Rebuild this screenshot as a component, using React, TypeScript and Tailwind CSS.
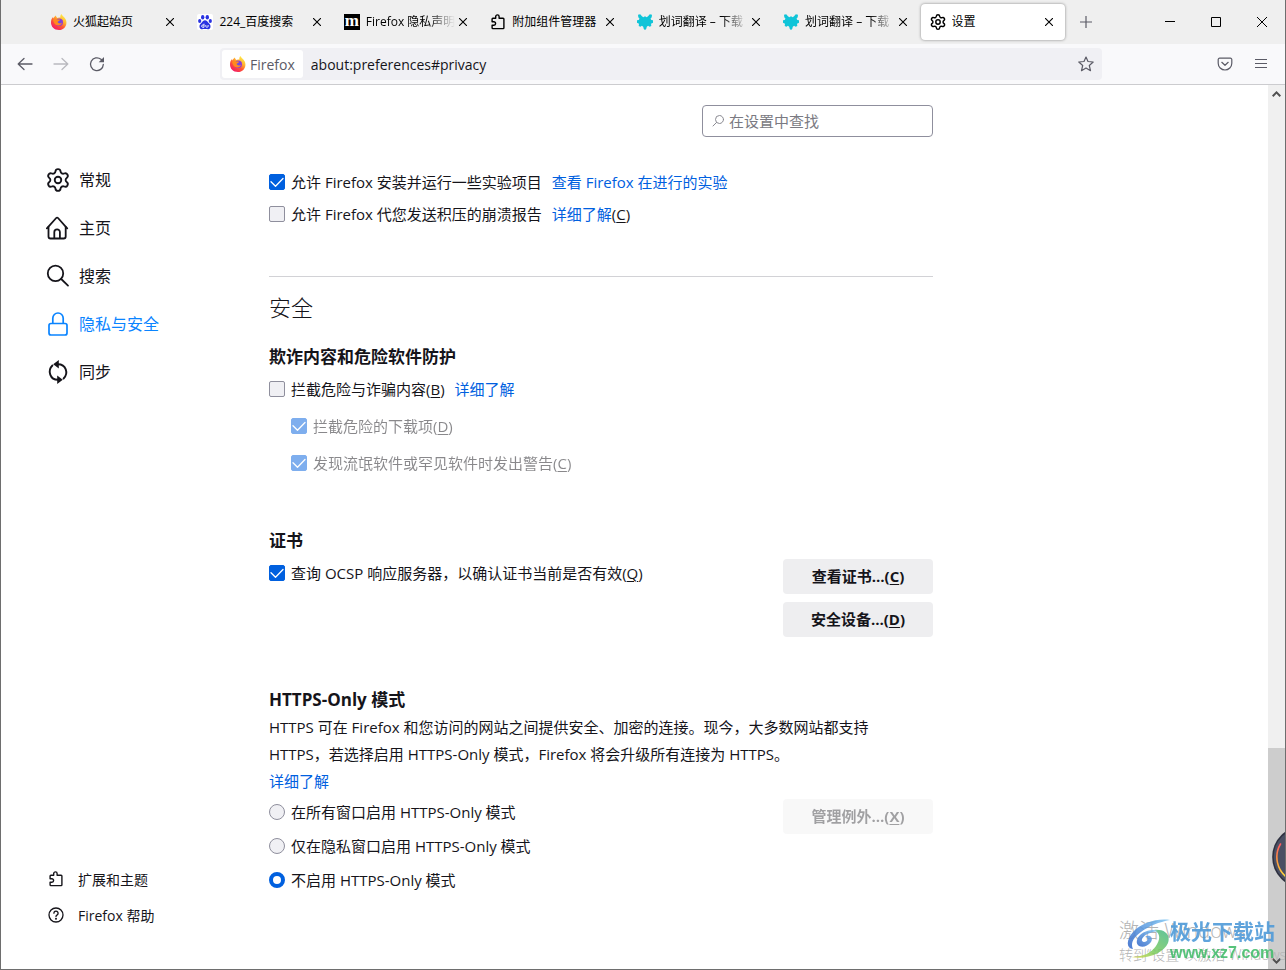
import React, { useState } from "react";
import { Settings } from "lucide-react";
import clsx from "clsx";

function FirefoxLogo({ id }: { id: string }) {
  return (
    <svg width="16" height="16" viewBox="0 0 32 32" className="shrink-0" aria-hidden="true">
      <defs>
        <linearGradient id={id + "-body"} x1="0.85" y1="0.05" x2="0.2" y2="1">
          <stop offset="0" stopColor="#fff44f" />
          <stop offset="0.35" stopColor="#ffb02e" />
          <stop offset="0.6" stopColor="#ff5634" />
          <stop offset="1" stopColor="#f0126f" />
        </linearGradient>
        <radialGradient id={id + "-core"}>
          <stop offset="0.2" stopColor="#6b4ce6" />
          <stop offset="1" stopColor="#9338d4" />
        </radialGradient>
      </defs>
      <path
        d="M21 0c1 4 6 6 8.500 11C34 21 27 32 16 32 6 32 0 25 0 17c0-4 1-8 4-11l1 3c1-3 3-5 5-6 0 2 1 4 3 5 2-1 4-1 6-1-1-3 0-5 2-7z"
        fill={`url(#${id}-body)`}
      />
      <circle cx="16.500" cy="16.500" r="7.500" fill={`url(#${id}-core)`} />
      <path d="M4 12c3-4 7-3 9-1h5c0 3-4 3-5 5 2 3 6 4 9 1-1 6-9 8-14 3-2-2-3-5-4-8z" fill="#ff8a1f" />
    </svg>
  );
}

function BaiduLogo() {
  return (
    <svg width="16" height="16" viewBox="0 0 16 16" className="shrink-0" aria-hidden="true">
      <rect width="16" height="16" rx="2" fill="#fff" />
      <g fill="#2932e1">
        <ellipse cx="5.700" cy="3.200" rx="1.700" ry="2.200" />
        <ellipse cx="10.300" cy="3.200" rx="1.700" ry="2.200" />
        <ellipse cx="2.700" cy="6.900" rx="1.600" ry="2" />
        <ellipse cx="13.300" cy="6.900" rx="1.600" ry="2" />
        <path d="M8 6.300c1.600 0 2.300 1.300 3.400 2.500 1.400 1.400 2.600 2.500 2 4.600-.5 1.800-2.400 2-3.900 1.700-1-.2-2-.2-3 0-1.500.3-3.400.1-3.900-1.700-.6-2.100.6-3.200 2-4.600C5.700 7.600 6.400 6.300 8 6.300z" />
      </g>
      <path d="M7 9.700v3.600H5.800a1.100 1.100 0 0 1 0-2.300H7M8.800 11v1.400c0 1.200 2.300 1.200 2.300 0V11" fill="none" stroke="#fff" strokeWidth="0.900" />
    </svg>
  );
}

function MozillaLogo() {
  return (
    <span className="flex size-4 shrink-0 items-center justify-center bg-black pb-[3px] font-['Liberation_Serif',serif] text-[17px] leading-none font-bold text-white">
      m
    </span>
  );
}

function TranslateLogo() {
  return (
    <svg width="16" height="16" viewBox="0 0 16 16" className="shrink-0" fill="#0fc4d8" aria-hidden="true">
      <path d="M1 .8 3.200.3 5 2.200 6.300 3.200 8 2.300l1.700.9L11 2.200 12.800.3l2.200.5-.3 2.400-1.200 1.600.8 1.200L16 6.300v2.500l-2 .9.300 2.200-1.700.8-1.500-1-1.300 1-.6 2.200L8 16l-1.200-1.100-.6-2.200-1.300-1-1.500 1-1.700-.8L2 9.700 0 8.800V6.300L1.700 6l.8-1.200L1.300 3.200z" />
    </svg>
  );
}

function PuzzleIcon() {
  return (
    <svg width="16" height="16" viewBox="0 0 16 16" className="shrink-0" fill="none" stroke="currentColor" strokeWidth="1.400" strokeLinejoin="round" aria-hidden="true">
      <path d="M5.700 4.200V2.600a1.700 1.700 0 0 1 3.400 0v1.600h4a.8.8 0 0 1 .8.8v8.800a.8.8 0 0 1-.8.8H2.900a.8.8 0 0 1-.8-.8v-2.600h1.800a1.600 1.600 0 0 0 0-3.400H2.100V5a.8.8 0 0 1 .8-.8z" />
    </svg>
  );
}

function HomeIcon() {
  return (
    <svg width="24" height="24" viewBox="0 0 24 24" fill="none" stroke="currentColor" strokeWidth="1.800" strokeLinecap="round" strokeLinejoin="round" aria-hidden="true">
      <path d="M.9 12.400 10.200 2a1.200 1.200 0 0 1 1.800 0l9.200 10.400" />
      <path d="M2.500 11v9.500a2 2 0 0 0 2 2h13.200a2 2 0 0 0 2-2V11" />
      <path d="M8.300 22.200v-6a2.800 2.800 0 0 1 5.600 0v6" />
    </svg>
  );
}

function SearchIcon() {
  return (
    <svg width="24" height="24" viewBox="0 0 24 24" fill="none" stroke="currentColor" strokeWidth="1.800" strokeLinecap="round" aria-hidden="true">
      <circle cx="9.500" cy="9.400" r="7.700" />
      <path d="m15.200 15 6.800 6.600" />
    </svg>
  );
}

function LockIcon() {
  return (
    <svg width="24" height="24" viewBox="0 0 24 24" fill="none" stroke="currentColor" strokeWidth="1.700" aria-hidden="true">
      <rect x="3" y="11.500" width="18" height="11.500" rx="2" />
      <path d="M6.800 11.500V6.200a5.200 5.200 0 0 1 10.400 0v5.300" />
    </svg>
  );
}

function SyncIcon() {
  return (
    <svg width="24" height="24" viewBox="0 0 24 24" fill="none" stroke="currentColor" strokeWidth="1.900" strokeLinecap="round" aria-hidden="true">
      <path d="M12 4.200c8 0 10.800 9.200 5.600 14.300M12 19.800C4 19.800 1.200 10.600 6.400 5.500" />
      <path d="M12.800 0v8.600L7.200 4.300zM11.200 15.400V24l5.600-4.300z" fill="currentColor" stroke="none" />
    </svg>
  );
}

function HelpIcon() {
  return (
    <svg width="16" height="16" viewBox="0 0 16 16" fill="none" stroke="currentColor" strokeWidth="1.300" strokeLinecap="round" aria-hidden="true">
      <circle cx="8" cy="8" r="7" />
      <path d="M5.900 6.200a2.100 2.100 0 1 1 3.300 1.700c-.8.500-1.200.8-1.200 1.600" />
      <circle cx="8" cy="11.700" r="0.400" fill="currentColor" />
    </svg>
  );
}

function CloseIcon() {
  return (
    <svg width="8" height="8" viewBox="0 0 8 8" stroke="currentColor" strokeWidth="1.100" aria-hidden="true">
      <path d="m0 0 8 8M8 0 0 8" />
    </svg>
  );
}

const tabs = [
  { title: "火狐起始页", icon: <FirefoxLogo id="tab" /> },
  { title: "224_百度搜索", icon: <BaiduLogo /> },
  { title: "Firefox 隐私声明", icon: <MozillaLogo />, fade: true },
  { title: "附加组件管理器", icon: <PuzzleIcon /> },
  { title: "划词翻译 – 下载", icon: <TranslateLogo />, fade: true },
  { title: "划词翻译 – 下载", icon: <TranslateLogo />, fade: true },
  { title: "设置", icon: <Settings size={16} viewBox="1 1 22 22" className="shrink-0" />, active: true },
];

function TabBar() {
  return (
    <header className="flex h-11 bg-[#efefef] pl-10 text-[12px] text-black">
      <div className="flex max-w-[1025px] min-w-0 flex-1">
        {tabs.map((tab, idx) => (
          <div
            key={idx}
            className={clsx(
              "mx-px my-1 flex min-w-0 flex-1 items-center rounded pr-3 pl-[9px]",
              tab.active && "bg-white shadow-[0_0_3px_rgba(0,0,0,0.45)]"
            )}
          >
            {tab.icon}
            <span
              className={clsx(
                "ml-[6px] min-w-0 flex-1 overflow-hidden whitespace-nowrap",
                tab.fade && "[mask-image:linear-gradient(to_left,transparent,black_26px)]"
              )}
            >
              {tab.title}
            </span>
            <button aria-label="关闭标签页" className="ml-1">
              <CloseIcon />
            </button>
          </div>
        ))}
      </div>
      <button aria-label="新建标签页" className="flex w-10 items-center justify-center text-[#5b5b66]">
        <svg width="12" height="12" viewBox="0 0 12 12" stroke="currentColor" strokeWidth="1.200">
          <path d="M6 0v12M0 6h12" />
        </svg>
      </button>
      <div className="ml-auto flex">
        <button aria-label="最小化" className="flex w-[46px] items-center justify-center">
          <svg width="10" height="10" viewBox="0 0 10 10" stroke="currentColor">
            <path d="M0 4.500h10" />
          </svg>
        </button>
        <button aria-label="最大化" className="flex w-[46px] items-center justify-center">
          <svg width="10" height="10" viewBox="0 0 10 10" fill="none" stroke="currentColor">
            <path d="M.5.5h9v9h-9z" />
          </svg>
        </button>
        <button aria-label="关闭" className="flex w-[46px] items-center justify-center">
          <svg width="10" height="10" viewBox="0 0 10 10" stroke="currentColor">
            <path d="m0 0 10 10M10 0 0 10" />
          </svg>
        </button>
      </div>
    </header>
  );
}

function Toolbar() {
  return (
    <div className="flex h-[41px] items-center border-b border-[#cccccf] bg-[#f9f9fb] px-[6px] text-[#5b5b66]">
      <button aria-label="后退" className="flex w-9 justify-center">
        <svg width="16" height="16" viewBox="0 0 16 16" fill="none" stroke="currentColor" strokeWidth="1.300" strokeLinecap="round" strokeLinejoin="round">
          <path d="M15 8H1.200M7 2.500 1.200 8 7 13.500" />
        </svg>
      </button>
      <button aria-label="前进" disabled className="flex w-9 justify-center opacity-40">
        <svg width="16" height="16" viewBox="0 0 16 16" fill="none" stroke="currentColor" strokeWidth="1.300" strokeLinecap="round" strokeLinejoin="round">
          <path d="M1 8h13.800M9 2.500 14.800 8 9 13.500" />
        </svg>
      </button>
      <button aria-label="刷新" className="flex w-9 justify-center">
        <svg width="16" height="16" viewBox="0 0 16 16" fill="none" stroke="currentColor" strokeWidth="1.300" strokeLinecap="round">
          <path d="M14.300 8.500A6.400 6.400 0 1 1 12 3.300l1.200 1.100" />
          <path d="M15 1v5.300H9.700z" fill="currentColor" stroke="none" />
        </svg>
      </button>
      <div className="mx-[105px] flex h-8 flex-1 items-center rounded bg-[#f0f0f4] p-[2px]">
        <div className="flex h-7 items-center gap-1 rounded-[3px] bg-white px-2 text-[14px]">
          <FirefoxLogo id="url" />
          Firefox
        </div>
        <input
          aria-label="地址"
          defaultValue="about:preferences#privacy"
          className="ml-2 min-w-0 flex-1 bg-transparent text-[14px] text-[#15141a] outline-none"
        />
        <button aria-label="收藏" className="mr-[6px]">
          <svg width="16" height="16" viewBox="0 0 16 16" fill="none" stroke="currentColor" strokeWidth="1.200" strokeLinejoin="round">
            <path d="m8 1 2 4.500 5.200.5-3.900 3.500 1.200 5.200L8 12.100l-4.500 2.600 1.200-5.200L.8 6 6 5.500z" />
          </svg>
        </button>
      </div>
      <button aria-label="Pocket" className="flex w-9 justify-center">
        <svg width="16" height="16" viewBox="0 0 16 16" fill="none" stroke="currentColor" strokeWidth="1.200" strokeLinecap="round" strokeLinejoin="round">
          <path d="M2.600 2.200h10.800a1.400 1.400 0 0 1 1.400 1.400v3.600a6.800 6.800 0 0 1-13.600 0V3.600a1.400 1.400 0 0 1 1.400-1.400z" />
          <path d="m4.800 6.300 3.200 3 3.200-3" />
        </svg>
      </button>
      <button aria-label="菜单" className="flex w-9 justify-center">
        <svg width="16" height="16" viewBox="0 0 16 16" stroke="currentColor" strokeWidth="1.200">
          <path d="M2 3.500h12M2 7.500h12M2 11.500h12" />
        </svg>
      </button>
    </div>
  );
}

const categories = [
  { name: "常规", icon: <Settings size={24} viewBox="1 1 22 22" strokeWidth={1.7} /> },
  { name: "主页", icon: <HomeIcon /> },
  { name: "搜索", icon: <SearchIcon /> },
  { name: "隐私与安全", icon: <LockIcon />, active: true },
  { name: "同步", icon: <SyncIcon /> },
];

function Sidebar() {
  return (
    <nav className="flex w-[223px] shrink-0 flex-col justify-between pt-[71px] pb-9">
      <ul>
        {categories.map((item) => (
          <li key={item.name}>
            <a href="#" className={clsx("flex h-12 items-center gap-[9px] text-[16px]", item.active && "text-[#0a84ff]")}>
              {item.icon}
              {item.name}
            </a>
          </li>
        ))}
      </ul>
      <ul className="pl-[2px] text-[14px]">
        <li>
          <a href="#" className="flex h-9 items-center gap-[14px]">
            <PuzzleIcon />
            扩展和主题
          </a>
        </li>
        <li>
          <a href="#" className="flex h-9 items-center gap-[14px]">
            <HelpIcon />
            Firefox 帮助
          </a>
        </li>
      </ul>
    </nav>
  );
}

// the underlined access key that follows a label
function Key({ k }: { k: string }) {
  return (
    <>
      (<span className="underline decoration-1 underline-offset-2">{k}</span>)
    </>
  );
}

function CheckRow({
  id,
  label,
  checked = false,
  disabled = false,
  children,
}: {
  id: string;
  label: React.ReactNode;
  checked?: boolean;
  disabled?: boolean;
  children?: React.ReactNode;
}) {
  const [on, setOn] = useState(checked);
  return (
    <div className={clsx("flex h-8 items-center", disabled && "opacity-50")}>
      <span className="grid">
        <input
          id={id}
          type="checkbox"
          checked={on}
          disabled={disabled}
          onChange={(e) => setOn(e.target.checked)}
          className="col-start-1 row-start-1 size-4 appearance-none rounded-[2px] border border-[#8f8f9d] bg-[#f0f0f4] checked:border-[#0060df] checked:bg-[#0060df]"
        />
        {on && (
          <svg viewBox="0 0 16 16" className="pointer-events-none col-start-1 row-start-1 size-4" fill="none" stroke="#fff" strokeWidth="1.300" strokeLinecap="round" strokeLinejoin="round">
            <path d="m2 7.800 4.500 4.500L14 4.500" />
          </svg>
        )}
      </span>
      <label htmlFor={id} className="ml-[6px]">
        {label}
      </label>
      {children}
    </div>
  );
}

function Link({ children }: { children: React.ReactNode }) {
  return (
    <a href="#" className="text-[#0060df]">
      {children}
    </a>
  );
}

function ActionButton({ label, k, disabled }: { label: string; k: string; disabled?: boolean }) {
  return (
    <button disabled={disabled} className="h-[35px] w-[150px] rounded bg-[#eeeef0] font-bold disabled:opacity-40">
      {label}…<Key k={k} />
    </button>
  );
}

const httpsModes = ["在所有窗口启用 HTTPS-Only 模式", "仅在隐私窗口启用 HTTPS-Only 模式", "不启用 HTTPS-Only 模式"];

function Preferences() {
  const [mode, setMode] = useState(2);
  return (
    <main className="max-w-[664px] min-w-0 flex-1 pt-5 text-[15px]">
      <div className="ml-auto flex h-8 w-[231px] items-center gap-1 rounded border border-[#8f8f9d] px-2 text-[#8a8a92]">
        <svg width="14" height="14" viewBox="0 0 14 14" fill="none" stroke="currentColor" strokeLinecap="round" aria-hidden="true">
          <circle cx="8.500" cy="5.500" r="4" />
          <path d="M5.500 8.500 2 12" />
        </svg>
        <input aria-label="在设置中查找" placeholder="在设置中查找" className="min-w-0 flex-1 outline-none placeholder:text-[#7a7a82]" />
      </div>

      <div className="mt-[29px]">
        <CheckRow id="studies" checked label="允许 Firefox 安装并运行一些实验项目">
          <span className="ml-[10px]">
            <Link>查看 Firefox 在进行的实验</Link>
          </span>
        </CheckRow>
        <CheckRow id="crash" label="允许 Firefox 代您发送积压的崩溃报告">
          <span className="ml-[10px]">
            <Link>详细了解</Link>
            <Key k="C" />
          </span>
        </CheckRow>
      </div>

      <h1 className="mt-[46px] border-t border-[#d2d2d6] pt-[14px] text-[22px] leading-8 font-light">安全</h1>

      <section className="mt-[22px]">
        <h2 className="mb-1 text-[17px] leading-6 font-bold">欺诈内容和危险软件防护</h2>
        <CheckRow id="block" label={<>拦截危险与诈骗内容<Key k="B" /></>}>
          <span className="ml-[10px]">
            <Link>详细了解</Link>
          </span>
        </CheckRow>
        <div className="mt-[5px] flex flex-col gap-[5px] pl-[22px]">
          <CheckRow id="downloads" checked disabled label={<>拦截危险的下载项<Key k="D" /></>} />
          <CheckRow id="uncommon" checked disabled label={<>发现流氓软件或罕见软件时发出警告<Key k="C" /></>} />
        </div>
      </section>

      <section className="mt-[50px]">
        <h2 className="mb-1 text-[17px] leading-6 font-bold">证书</h2>
        <div className="flex justify-between">
          <CheckRow id="ocsp" checked label={<>查询 OCSP 响应服务器，以确认证书当前是否有效<Key k="Q" /></>} />
          <div className="flex flex-col gap-2 pt-[2px]">
            <ActionButton label="查看证书" k="C" />
            <ActionButton label="安全设备" k="D" />
          </div>
        </div>
      </section>

      <section className="mt-[51px]">
        <h2 className="mb-[2px] text-[17px] leading-6 font-bold">HTTPS-Only 模式</h2>
        <p className="max-w-[620px] leading-[27px]">
          HTTPS 可在 Firefox 和您访问的网站之间提供安全、加密的连接。现今，大多数网站都支持
          <br />
          HTTPS，若选择启用 HTTPS-Only 模式，Firefox 将会升级所有连接为 HTTPS。
          <br />
          <Link>详细了解</Link>
        </p>
        <div className="flex justify-between">
          <div>
            {httpsModes.map((name, idx) => (
              <label key={name} className="flex h-[34px] items-center gap-[6px]">
                <input
                  type="radio"
                  name="https-only"
                  checked={mode === idx}
                  onChange={() => setMode(idx)}
                  className="size-4 appearance-none rounded-full border border-[#8f8f9d] bg-[#f0f0f4] checked:border-4 checked:border-[#0060df] checked:bg-white"
                />
                {name}
              </label>
            ))}
          </div>
          <div className="pt-1">
            <ActionButton label="管理例外" k="X" disabled />
          </div>
        </div>
      </section>
    </main>
  );
}

function Scrollbar() {
  return (
    <div className="relative ml-auto flex w-[17px] shrink-0 flex-col bg-[#f0f0f0] text-[#505050]">
      <span className="flex h-[17px] items-center justify-center">
        <svg width="9" height="6" viewBox="0 0 9 6" fill="none" stroke="currentColor" strokeWidth="2">
          <path d="M.7 5.200 4.500 1.400l3.800 3.800" />
        </svg>
      </span>
      <div className="flex-1" />
      <div className="h-[204px] bg-[#cdcdcd]" />
      <span className="flex h-[17px] items-center justify-center bg-[#cdcdcd]">
        <svg width="9" height="6" viewBox="0 0 9 6" fill="none" stroke="currentColor" strokeWidth="2">
          <path d="M.7.8l3.800 3.800L8.300.8" />
        </svg>
      </span>
      <svg width="64" height="64" viewBox="0 0 64 64" className="absolute bottom-20 left-[2px]" fill="none" aria-hidden="true">
        <defs>
          <linearGradient id="gauge" x1="0" y1="0" x2="0" y2="1">
            <stop offset="0" stopColor="#ff5a5f" />
            <stop offset="0.5" stopColor="#ff9a3d" />
            <stop offset="1" stopColor="#ffe23d" />
          </linearGradient>
        </defs>
        <circle cx="33" cy="32" r="31" fill="#000" opacity="0.200" />
        <circle cx="33" cy="32" r="30" fill="#4a4f63" stroke="#2d3040" strokeWidth="1.500" />
        <path d="M10.500 19a25.500 25.500 0 0 0 8 34.500" stroke="url(#gauge)" strokeWidth="1.600" strokeLinecap="round" />
      </svg>
    </div>
  );
}

function Watermark() {
  return (
    <div className="pointer-events-none absolute right-0 bottom-0 h-[51px] w-[166px] overflow-hidden whitespace-nowrap">
      <div className="absolute top-0 left-0 text-[#b4b4b4]">
        <div className="text-[20px] leading-[26px] font-light">激活 Windows</div>
        <div className="text-[14px] leading-[22px] font-light">转到“设置”以激活 Windows。</div>
      </div>
      <svg width="44" height="42" viewBox="0 0 44 42" className="absolute top-0 left-2" aria-hidden="true">
        <defs>
          <linearGradient id="swirl-blue" x1="1" y1="0" x2="0" y2="1">
            <stop offset="0" stopColor="#7cc4f2" />
            <stop offset="1" stopColor="#2e63c8" />
          </linearGradient>
          <linearGradient id="swirl-green" x1="1" y1="0" x2="0" y2="1">
            <stop offset="0" stopColor="#45b98a" />
            <stop offset="0.600" stopColor="#7ccb5c" />
            <stop offset="1" stopColor="#e3dd48" />
          </linearGradient>
        </defs>
        <g opacity="0.850">
          <path d="M43 2C30 0 14 5 6 14-1 22-1 30 6 31c-3-6 1-12 8-17C22 8 32 4 43 2z" fill="url(#swirl-blue)" />
          <path d="M27 12c10-1 17 4 14 13C37 35 20 42 4 39c12 0 20-4 25-11 5-8 4-13-2-16z" fill="url(#swirl-green)" />
          <path d="M31 13c-8-3-19 2-21 9-2 8 9 9 14 2 3-5-2-8-6-5 4 0 3 5-1 5-5-1-1-9 14-11z" fill="url(#swirl-blue)" />
        </g>
      </svg>
      <div className="absolute top-0 left-[51px] font-bold opacity-90">
        <div className="text-[21px] leading-[26px] text-[#4f9bd9]">极光下载站</div>
        <div className="font-['Liberation_Sans',sans-serif] text-[16px] leading-[18px] text-[#45bd6d]">www.xz7.com</div>
      </div>
    </div>
  );
}

export default function App() {
  return (
    <div className="relative flex min-h-screen flex-col overflow-hidden border-x border-b border-[#6e6e6e] bg-white font-['Open_Sans','Noto_Sans_CJK_SC',sans-serif] text-[#15141a]">
      <TabBar />
      <Toolbar />
      <div className="flex flex-1 pl-[45px]">
        <Sidebar />
        <Preferences />
        <Scrollbar />
      </div>
      <Watermark />
    </div>
  );
}
